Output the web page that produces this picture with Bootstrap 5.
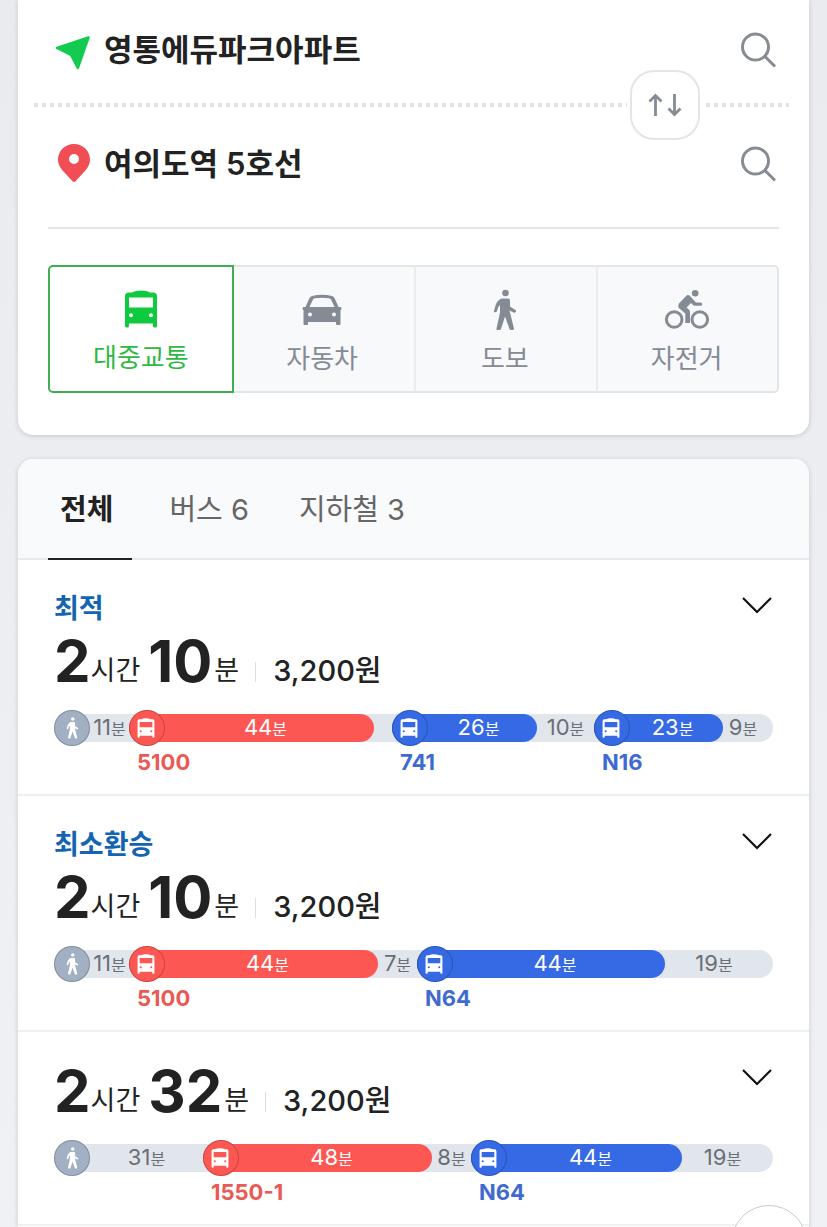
<!DOCTYPE html>
<html lang="ko">
<head>
<meta charset="utf-8">
<meta name="viewport" content="width=device-width, initial-scale=1">
<title>길찾기</title>
<link rel="stylesheet" href="https://cdn.jsdelivr.net/npm/bootstrap@5.3.0/dist/css/bootstrap.min.css">
<style>
  body { font-family: Inter, "Noto Sans CJK KR", sans-serif; background: linear-gradient(#e9ebef, #eff1f5); color: #222; padding: 0 18px; }
  svg { display: block; flex: none; }
  .panel { background: #fff; box-shadow: 0 1px 5px rgba(40, 50, 70, .2); }
  .search-panel { border-radius: 0 0 15px 15px; padding-bottom: 42px; }
  .result-panel { border-radius: 15px 15px 0 0; margin-top: 24px; }

  .place { height: 103px; padding: 0 32px 4px 36px; gap: 10px; }
  .place-end { height: 120px; padding-bottom: 7px; }
  .place input { font-size: 31px; line-height: 44px; font-weight: 600; color: #222; min-width: 0; outline-offset: 4px; }
  .place button { color: #868b94; }
  .dots { height: 4px; margin: 0 20px 0 16px; background: repeating-linear-gradient(90deg, #e2e3e4 0 4px, transparent 4px 8px); }
  .swap { width: 70px; height: 70px; top: 50%; right: 109px; transform: translateY(-50%); border: 2px solid #e4e5e7; border-radius: 24px; background: #fff; color: #868b94; box-shadow: 0 0 0 3px #fff; }
  .rule { height: 2px; margin: 0 30px 36px; background: #e1e4e6; }

  .modes { display: grid; grid-template-columns: repeat(4, 1fr); margin: 0 30px; height: 128px; }
  .mode { border: 2px solid #e3e6e8; border-right-width: 0; border-left-color: #eaeced; background: #f8f9fb; color: #858b95; font-size: 26px; line-height: 36px; padding: 9px 2px 0 0; gap: 12px; }
  .mode:last-child { border-right-width: 2px; border-radius: 0 5px 5px 0; }
  .mode.chosen { border: 2px solid #3fae4e; border-radius: 5px 0 0 5px; background: #fff; color: #2fb944; margin-right: -3px; z-index: 1; padding: 8px 0 0; }
  .mode.chosen svg { color: #0fc93f; }

  .kinds { height: 101px; padding: 0 30px; gap: 25px; background: #f9fafc; border-bottom: 2px solid #e8eaed; border-radius: 15px 15px 0 0; }
  .kind { color: #666; font-size: 29px; padding: 3px 13px 0 12px; border-bottom: 2px solid transparent; margin-bottom: -2px; }
  .kind.chosen { color: #222; font-weight: 700; border-color: #222; padding-right: 19px; }

  .route { padding: 30px 36px 16px; border-bottom: 2px solid #eff0f2; }
  .tag { font-size: 27px; line-height: 38px; font-weight: 600; color: #1464b4; margin-bottom: 4px; }
  .total { height: 60px; line-height: 36px; font-size: 27px; margin-bottom: 18px; }
  .total b { font-size: 58px; line-height: 58px; font-weight: 700; align-self: flex-start; }
  .total span { margin-bottom: 3px; }
  .total .minute { margin-left: 2px; }
  .total .bar { width: 1px; height: 20px; background: #dcdee0; margin: 0 17px 10px 16px; }
  .fare { font-size: 29px; font-weight: 500; }
  .unfold { color: #111; top: 36px; right: 36px; }

  .legs::before { content: ""; position: absolute; left: 8px; right: 0; top: 4px; height: 28px; border-radius: 14px; background: #e1e5ec; }
  .leg { flex: var(--span) 1 0; min-width: 0; position: relative; }
  .strip { height: 28px; margin: 4px 0; border-radius: 14px; font-size: 22px; line-height: 28px; color: #6a6e75; }
  .strip small { font-size: 16px; line-height: 28px; }
  .time { flex: 1; text-align: center; white-space: nowrap; }
  .leg:last-child .time { padding-right: 10px; }
  .dot { width: 36px; height: 36px; border-radius: 50%; border: 1px solid rgba(0, 0, 0, .2); color: #fff; background: #a2b0c3; flex: none; }
  .line-no { font-size: 22px; line-height: 32px; font-weight: 700; padding-left: 8px; }
  .ride .dot { padding-right: 2px; }
  .ride .time { color: #fff; padding-right: 8px; }
  .red .strip, .red .dot { background: #fc5753; }
  .red .line-no { color: #ea5a55; }
  .blue .strip, .blue .dot { background: #356ae4; }
  .blue .line-no { color: #3f6bd0; }

  .to-top { width: 76px; height: 76px; right: 20px; bottom: -54px; background: #fff; border: 1px solid #c9cacc; }
</style>
</head>
<body class="min-vh-100 d-flex flex-column">

<svg width="0" height="0" class="position-absolute" aria-hidden="true">
  <symbol id="bus" viewBox="0 0 32 38">
    <path fill="currentColor" fill-rule="evenodd" d="M3 2.500H7Q10 .5 16 .5T25 2.500H29Q32 3 32 6V36Q32 37.500 30.500 37.500H29.500Q28 37.500 28 36V33.500H4V36Q4 37.500 2.500 37.500H1.500Q0 37.500 0 36V6Q0 3 3 2.500ZM4 7.500V17.500H28V7.500ZM6 23.300A2 2 0 1 0 6 27.300 2 2 0 1 0 6 23.300ZM26 23.300A2 2 0 1 0 26 27.300 2 2 0 1 0 26 23.300Z"/>
  </symbol>
  <symbol id="walker" viewBox="0 0 24 42">
    <circle cx="12.500" cy="4" r="3.300" fill="currentColor"/>
    <path fill="currentColor" d="M9 9.500H15Q17 9.500 17 11.500V17.500L22.500 21Q23.500 22 22.700 23T20.500 23.500L16.500 21.500 21 39.500Q21 41 19.500 41H18Q17 41 16.500 40L12 27.500 8 40Q7.500 41 6.500 41H4.500Q3 41 3.500 39.500L7 23.500V16L5.300 18 4 22Q3.500 23.500 2 23.200T1 21.500L3 15Q5.500 10 9 9.500Z"/>
  </symbol>
  <symbol id="lens" viewBox="0 0 36 36">
    <g fill="none" stroke="currentColor" stroke-width="3"><circle cx="14.500" cy="15" r="13"/><path d="M24 24.500 34 34.500"/></g>
  </symbol>
  <symbol id="chevron" viewBox="0 0 32 18">
    <path d="M2 2 16 16 30 2" fill="none" stroke="currentColor" stroke-width="2.200"/>
  </symbol>
</svg>

<section class="panel search-panel">
  <form class="m-0">
    <div class="place d-flex align-items-center">
      <svg width="40" height="40" viewBox="0 0 40 40" aria-hidden="true"><path d="M34.500 7.500 3 18 17 25 23.800 38Z" fill="#14cb52" stroke="#14cb52" stroke-width="2.500" stroke-linejoin="round"/></svg>
      <input class="flex-grow-1 border-0 p-0 bg-transparent" type="text" value="영통에듀파크아파트" aria-label="출발지">
      <button type="button" class="btn p-0 border-0" aria-label="출발지 검색"><svg width="36" height="36"><use href="#lens"/></svg></button>
    </div>
    <div class="position-relative">
      <div class="dots"></div>
      <button type="button" class="swap btn p-0 position-absolute d-flex align-items-center justify-content-center" aria-label="출발지와 도착지 바꾸기">
        <svg width="34" height="24" viewBox="0 0 34 24" fill="none" stroke="currentColor" stroke-width="2.800"><path d="M7.500 23V2.500M1.500 8.500 7.500 2.500 13.500 8.500M26.500 1V21.500M20.500 15.500 26.500 21.500 32.500 15.500"/></svg>
      </button>
    </div>
    <div class="place place-end d-flex align-items-center">
      <svg width="40" height="40" viewBox="0 0 40 40" aria-hidden="true"><path fill="#f14d54" fill-rule="evenodd" d="M20 0C29 0 36 7 36 15.500 36 21 33 25 29.500 28.500L21.500 37.300Q20 38.500 18.500 37.300L10.500 28.500C7 25 4 21 4 15.500 4 7 11 0 20 0ZM20 10A5 5 0 1 0 20 20 5 5 0 1 0 20 10Z"/></svg>
      <input class="flex-grow-1 border-0 p-0 bg-transparent" type="text" value="여의도역 5호선" aria-label="도착지">
      <button type="button" class="btn p-0 border-0" aria-label="도착지 검색"><svg width="36" height="36"><use href="#lens"/></svg></button>
    </div>
  </form>
  <div class="rule"></div>
  <div class="modes">
    <button type="button" class="mode chosen d-flex flex-column align-items-center justify-content-center"><svg width="32" height="38"><use href="#bus"/></svg>대중교통</button>
    <button type="button" class="mode d-flex flex-column align-items-center justify-content-center">
      <svg width="40" height="38" viewBox="0 0 40 38"><path fill="currentColor" fill-rule="evenodd" d="M10 5Q20 2.500 30 5 32 5.500 33 8L36.500 16H38.500Q39.500 16 39.500 17.500T38.500 19V33Q38.500 34 37.500 34H35Q34 34 34 33V31H6V33Q6 34 5 34H2.500Q1.500 34 1.500 33V19Q.5 19 .5 17.500T1.500 16H3.500L7 8Q8 5.500 10 5ZM11 8.500 7.500 16H32.500L29 8.500Q28.500 7.500 27 7.300 20 6.300 13 7.300 11.500 7.500 11 8.500ZM8 21.500A2 2 0 1 0 8 25.500 2 2 0 1 0 8 21.500ZM32 21.500A2 2 0 1 0 32 25.500 2 2 0 1 0 32 21.500Z"/></svg>자동차</button>
    <button type="button" class="mode d-flex flex-column align-items-center justify-content-center"><svg width="24" height="38" viewBox="0 0 24 38" overflow="visible"><use href="#walker" y="-2" width="24" height="42"/></svg>도보</button>
    <button type="button" class="mode d-flex flex-column align-items-center justify-content-center">
      <svg width="46" height="38" viewBox="0 0 46 38" overflow="visible"><g fill="none" stroke="currentColor" stroke-width="3"><circle cx="10.200" cy="28.500" r="7.800"/><circle cx="35.800" cy="28.500" r="7.800"/></g><circle cx="31.200" cy="2.300" r="3.300" fill="currentColor"/><path fill="currentColor" d="M22.500 4.500Q24 3.300 25.500 4.500L32 11.500H36.500Q38.200 11.700 38.200 13.200T36.500 14.800H31Q29.800 14.800 28.800 13.800L27 12 22.500 16.500 25.300 19Q26 20 26 21V32H21.300V22.500L14.800 17Q13.500 15 15 12.500Z"/></svg>자전거</button>
  </div>
</section>

<main class="panel result-panel flex-grow-1">
  <nav class="kinds d-flex" aria-label="경로 종류">
    <a href="#all" class="kind chosen d-flex align-items-center text-decoration-none" aria-current="true">전체</a>
    <a href="#buses" class="kind d-flex align-items-center text-decoration-none">버스 6</a>
    <a href="#subway" class="kind d-flex align-items-center text-decoration-none">지하철 3</a>
  </nav>

  <article class="route position-relative">
    <div class="tag">최적</div>
    <div class="total d-flex align-items-end"><b>2</b><span class="me-2">시간</span><b>10</b><span class="minute">분</span><span class="bar"></span><span class="fare">3,200원</span></div>
    <button type="button" class="unfold btn border-0 p-0 position-absolute" aria-label="펼치기"><svg width="32" height="18"><use href="#chevron"/></svg></button>
    <div class="legs d-flex position-relative">
      <div class="leg" style="--span:75"><div class="strip d-flex align-items-center"><span class="dot d-flex align-items-center justify-content-center"><svg width="13" height="22"><use href="#walker"/></svg></span><span class="time">11<small>분</small></span></div></div>
      <div class="leg ride red" style="--span:245"><div class="strip d-flex align-items-center"><span class="dot d-flex align-items-center justify-content-center"><svg width="18" height="20"><use href="#bus"/></svg></span><span class="time">44<small>분</small></span></div><div class="line-no">5100</div></div>
      <div class="leg" style="--span:18"></div>
      <div class="leg ride blue" style="--span:145"><div class="strip d-flex align-items-center"><span class="dot d-flex align-items-center justify-content-center"><svg width="18" height="20"><use href="#bus"/></svg></span><span class="time">26<small>분</small></span></div><div class="line-no">741</div></div>
      <div class="leg" style="--span:57"><div class="strip d-flex align-items-center"><span class="time">10<small>분</small></span></div></div>
      <div class="leg ride blue" style="--span:129"><div class="strip d-flex align-items-center"><span class="dot d-flex align-items-center justify-content-center"><svg width="18" height="20"><use href="#bus"/></svg></span><span class="time">23<small>분</small></span></div><div class="line-no">N16</div></div>
      <div class="leg" style="--span:50"><div class="strip d-flex align-items-center"><span class="time">9<small>분</small></span></div></div>
    </div>
  </article>

  <article class="route position-relative">
    <div class="tag">최소환승</div>
    <div class="total d-flex align-items-end"><b>2</b><span class="me-2">시간</span><b>10</b><span class="minute">분</span><span class="bar"></span><span class="fare">3,200원</span></div>
    <button type="button" class="unfold btn border-0 p-0 position-absolute" aria-label="펼치기"><svg width="32" height="18"><use href="#chevron"/></svg></button>
    <div class="legs d-flex position-relative">
      <div class="leg" style="--span:75"><div class="strip d-flex align-items-center"><span class="dot d-flex align-items-center justify-content-center"><svg width="13" height="22"><use href="#walker"/></svg></span><span class="time">11<small>분</small></span></div></div>
      <div class="leg ride red" style="--span:249"><div class="strip d-flex align-items-center"><span class="dot d-flex align-items-center justify-content-center"><svg width="18" height="20"><use href="#bus"/></svg></span><span class="time">44<small>분</small></span></div><div class="line-no">5100</div></div>
      <div class="leg" style="--span:39"><div class="strip d-flex align-items-center"><span class="time">7<small>분</small></span></div></div>
      <div class="leg ride blue" style="--span:248"><div class="strip d-flex align-items-center"><span class="dot d-flex align-items-center justify-content-center"><svg width="18" height="20"><use href="#bus"/></svg></span><span class="time">44<small>분</small></span></div><div class="line-no">N64</div></div>
      <div class="leg" style="--span:108"><div class="strip d-flex align-items-center"><span class="time">19<small>분</small></span></div></div>
    </div>
  </article>

  <article class="route position-relative">
    <div class="total d-flex align-items-end"><b>2</b><span class="me-2">시간</span><b>32</b><span class="minute">분</span><span class="bar"></span><span class="fare">3,200원</span></div>
    <button type="button" class="unfold btn border-0 p-0 position-absolute" aria-label="펼치기"><svg width="32" height="18"><use href="#chevron"/></svg></button>
    <div class="legs d-flex position-relative">
      <div class="leg" style="--span:149"><div class="strip d-flex align-items-center"><span class="dot d-flex align-items-center justify-content-center"><svg width="13" height="22"><use href="#walker"/></svg></span><span class="time">31<small>분</small></span></div></div>
      <div class="leg ride red" style="--span:229"><div class="strip d-flex align-items-center"><span class="dot d-flex align-items-center justify-content-center"><svg width="18" height="20"><use href="#bus"/></svg></span><span class="time">48<small>분</small></span></div><div class="line-no">1550-1</div></div>
      <div class="leg" style="--span:39"><div class="strip d-flex align-items-center"><span class="time">8<small>분</small></span></div></div>
      <div class="leg ride blue" style="--span:211"><div class="strip d-flex align-items-center"><span class="dot d-flex align-items-center justify-content-center"><svg width="18" height="20"><use href="#bus"/></svg></span><span class="time">44<small>분</small></span></div><div class="line-no">N64</div></div>
      <div class="leg" style="--span:91"><div class="strip d-flex align-items-center"><span class="time">19<small>분</small></span></div></div>
    </div>
  </article>
</main>

<button type="button" class="to-top btn rounded-circle position-fixed" aria-label="맨 위로"></button>

<script src="https://cdn.jsdelivr.net/npm/bootstrap@5.3.0/dist/js/bootstrap.bundle.min.js"></script>
</body>
</html>
